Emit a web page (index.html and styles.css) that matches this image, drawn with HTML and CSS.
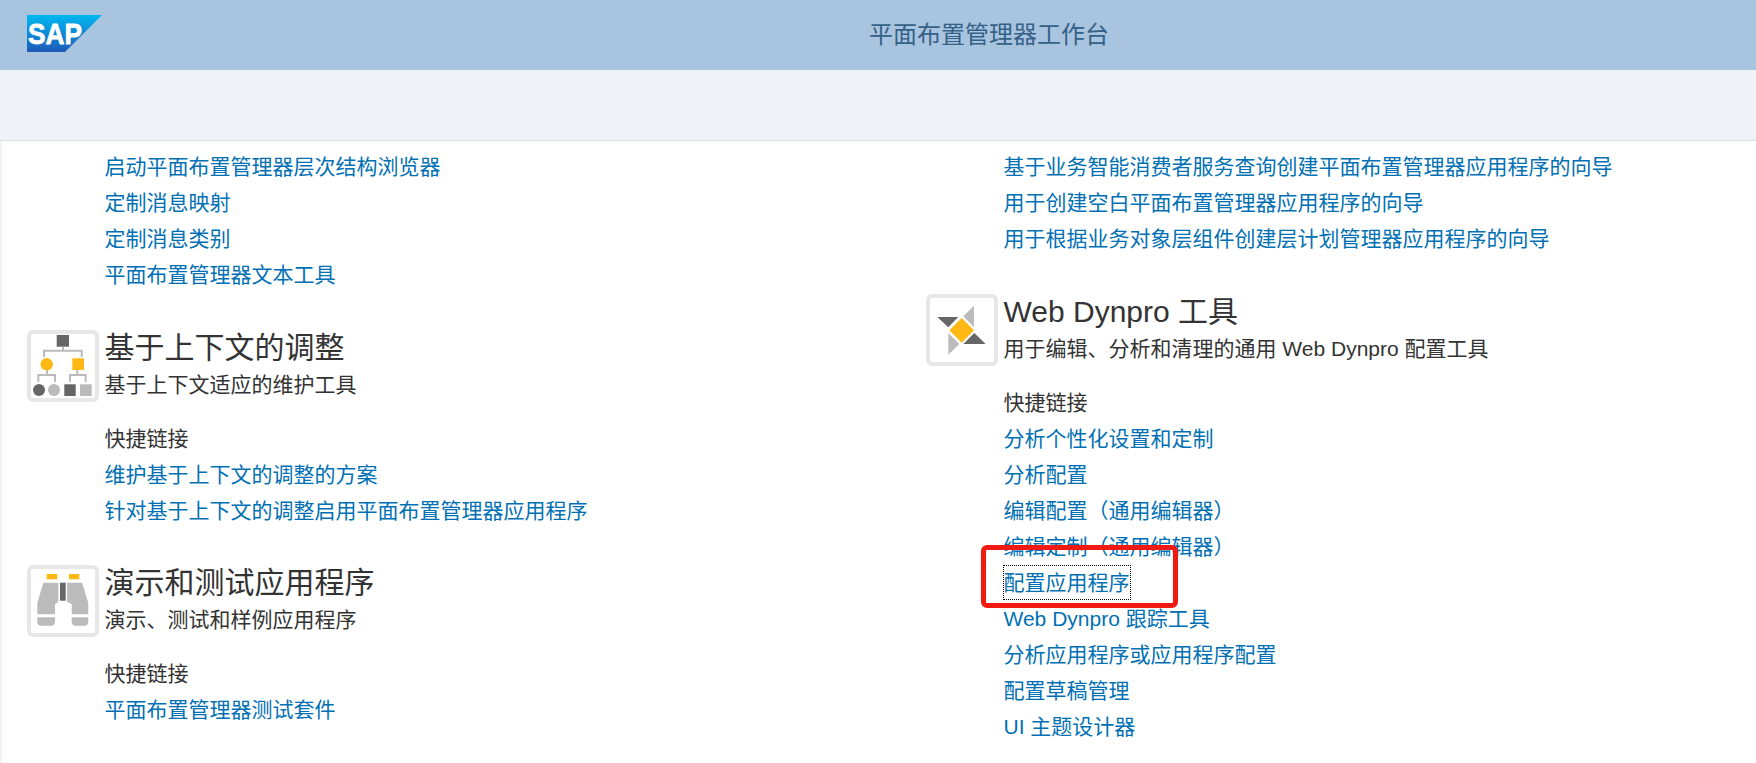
FILE: index.html
```html
<!DOCTYPE html>
<html lang="zh-CN">
<head>
<meta charset="UTF-8" />
<meta name="viewport" content="width=device-width, initial-scale=1" />
<title>平面布置管理器工作台</title>
<link rel="stylesheet" href="styles.css">
</head>
<body>

<header class="title-bar">
  <svg class="sap-logo" width="75" height="37" viewBox="0 0 75 37">
    <defs>
      <linearGradient id="sap-blue" x1="0" y1="0" x2="0" y2="1">
        <stop offset="0" stop-color="#00b8f1" />
        <stop offset="1" stop-color="#1e5ab8" />
      </linearGradient>
    </defs>
    <polygon points="0,0 75,0 38,37 0,37" fill="url(#sap-blue)" />
    <text class="sap-logo-text" x="1" y="29" textLength="54" lengthAdjust="spacingAndGlyphs">SAP</text>
  </svg>
  <div class="page-title">平面布置管理器工作台</div>
</header>

<div class="tool-bar"></div>

<main class="workspace">
  <section class="column">
    <ul class="links">
      <li><a href="#">启动平面布置管理器层次结构浏览器</a></li>
      <li><a href="#">定制消息映射</a></li>
      <li><a href="#">定制消息类别</a></li>
      <li><a href="#">平面布置管理器文本工具</a></li>
    </ul>

    <div class="group">
      <div class="group-head">
        <div class="group-icon">
          <svg width="66" height="66" viewBox="3 3 66 66">
            <path class="wire" d="M36 17v4M17 27v-6.300h37.700V27M20 40v5M11.300 52v-7H28v7M50.300 40v5M43 52v-7h15.700v7" />
            <rect class="dark" x="29.700" y="5" width="12.300" height="11.700" />
            <circle class="amber" cx="19.700" cy="34.300" r="6.200" />
            <rect class="amber" x="45.300" y="28.300" width="11.700" height="11.700" />
            <circle class="dark" cx="12" cy="60" r="6" />
            <circle class="light" cx="27" cy="60" r="6" />
            <rect class="dark" x="37.300" y="54.300" width="11.400" height="11.700" />
            <rect class="light" x="53" y="54.300" width="11.700" height="11.700" />
          </svg>
        </div>
        <div>
          <h2>基于上下文的调整</h2>
          <p>基于上下文适应的维护工具</p>
        </div>
      </div>
      <h3>快捷链接</h3>
      <ul class="links">
        <li><a href="#">维护基于上下文的调整的方案</a></li>
        <li><a href="#">针对基于上下文的调整启用平面布置管理器应用程序</a></li>
      </ul>
    </div>

    <div class="group">
      <div class="group-head">
        <div class="group-icon">
          <svg width="66" height="66" viewBox="3 3 66 66">
            <rect class="amber" x="19.700" y="9" width="10.600" height="5.300" />
            <rect class="amber" x="42" y="9" width="10.300" height="5.300" />
            <rect class="dark" x="33" y="17.700" width="5.700" height="18" />
            <polygon class="light" points="16.300,17.700 31.300,17.700 31.300,37 28,39 28,49.300 10.300,49.300 10.300,38" />
            <polygon class="light" points="55.100,17.700 40.100,17.700 40.100,37 44.700,39 44.700,49.300 61.300,49.300 61.300,38" />
            <path class="light" d="M10.300 52.300H28v4.400a4 4 0 0 1-4 4H14.300a4 4 0 0 1-4-4z" />
            <path class="light" d="M44.700 52.300h16.600v4.400a4 4 0 0 1-4 4H48.700a4 4 0 0 1-4-4z" />
          </svg>
        </div>
        <div>
          <h2>演示和测试应用程序</h2>
          <p>演示、测试和样例应用程序</p>
        </div>
      </div>
      <h3>快捷链接</h3>
      <ul class="links">
        <li><a href="#">平面布置管理器测试套件</a></li>
      </ul>
    </div>
  </section>

  <section class="column">
    <ul class="links">
      <li><a href="#">基于业务智能消费者服务查询创建平面布置管理器应用程序的向导</a></li>
      <li><a href="#">用于创建空白平面布置管理器应用程序的向导</a></li>
      <li><a href="#">用于根据业务对象层组件创建层计划管理器应用程序的向导</a></li>
    </ul>

    <div class="group">
      <div class="group-head">
        <div class="group-icon">
          <svg width="66" height="66" viewBox="3 3 66 66">
            <polygon class="dark" points="11.300,23 32.300,23 22.300,33.300" />
            <polygon class="light" points="48,11.700 48,33.300 37.300,22.300" />
            <polygon class="dark" points="37.300,50 59.700,50 48.300,39" />
            <polygon class="light" points="22.300,39 33.300,50 22.300,60.700" />
            <polygon class="amber" points="35.700,24 48,36.300 35.700,48.700 23.300,36.300" />
          </svg>
        </div>
        <div>
          <h2>Web Dynpro 工具</h2>
          <p>用于编辑、分析和清理的通用 Web Dynpro 配置工具</p>
        </div>
      </div>
      <h3>快捷链接</h3>
      <ul class="links">
        <li><a href="#">分析个性化设置和定制</a></li>
        <li><a href="#">分析配置</a></li>
        <li><a href="#">编辑配置（通用编辑器）</a></li>
        <li><a href="#">编辑定制（通用编辑器）</a></li>
        <li><a href="#" class="focused">配置应用程序</a></li>
        <li><a href="#">Web Dynpro 跟踪工具</a></li>
        <li><a href="#">分析应用程序或应用程序配置</a></li>
        <li><a href="#">配置草稿管理</a></li>
        <li><a href="#">UI 主题设计器</a></li>
      </ul>
    </div>
  </section>
</main>

<div class="red-mark"></div>

</body>
</html>
```

FILE: styles.css
```css
html, body {
  margin: 0;
  height: 100%;
  overflow: hidden;
}
body {
  position: relative;
  background-color: #fff;
  color: #333;
  font-family: "Liberation Sans", "Noto Sans CJK SC", sans-serif;
  font-size: 21px;
  line-height: 36px;
}
.title-bar {
  display: flex;
  align-items: center;
  justify-content: center;
  position: relative;
  height: 70px;
  padding-left: 222px;
  box-sizing: border-box;
  background-color: #a9c4df;
}
.sap-logo {
  position: absolute;
  left: 27px;
  top: 15px;
}
.sap-logo-text {
  fill: #fff;
  stroke: #fff;
  stroke-width: 0.800;
  font-family: "Liberation Sans", sans-serif;
  font-weight: bold;
  font-size: 30px;
}
.page-title {
  font-size: 24px;
  color: #346187;
}
.tool-bar {
  height: 70px;
  background-color: #eff3f8;
  border-bottom: 1px solid #d3e0ee;
}
.workspace {
  display: grid;
  grid-template-columns: 899px 1fr;
  height: 622px;
  overflow: hidden;
  padding-top: 8px;
  box-sizing: border-box;
  border-left: 2px solid #eff3f8;
}
.column {
  padding-left: 25px;
}
.links {
  list-style: none;
  margin: 0;
  padding: 0;
}
.column > .links,
.group .links,
h3 {
  margin-left: 77.500px;
}
.links a {
  color: #0070b4;
  text-decoration: none;
}
.links a.focused {
  display: inline-block;
  line-height: 33px;
  vertical-align: top;
  margin-top: 1px;
  outline: 1px dotted #000;
}
.group {
  margin-top: 37px;
}
.group + .group {
  margin-top: 36px;
}
.group-head {
  display: flex;
  gap: 5.500px;
}
.group-icon {
  display: flex;
  align-items: center;
  justify-content: center;
  width: 72px;
  height: 72px;
  box-sizing: border-box;
  border: 4px solid #e7e7e7;
  border-radius: 6px;
}
.group-icon svg {
  flex: none;
}
.group-icon .dark { fill: #666; }
.group-icon .light { fill: #bbb; }
.group-icon .amber { fill: #fdb813; }
.group-icon .wire {
  fill: none;
  stroke: #bbb;
  stroke-width: 2;
}
h2 {
  margin: 0;
  font-size: 30px;
  font-weight: normal;
  line-height: 36px;
}
.group-head p {
  margin: 1px 0 0;
}
h3 {
  margin-top: 18px;
  margin-bottom: 0;
  font-size: 21px;
  font-weight: normal;
}
.red-mark {
  position: absolute;
  left: 981px;
  top: 545px;
  width: 197px;
  height: 63px;
  box-sizing: border-box;
  border: 5px solid #f01a12;
  border-radius: 6px;
}
```
